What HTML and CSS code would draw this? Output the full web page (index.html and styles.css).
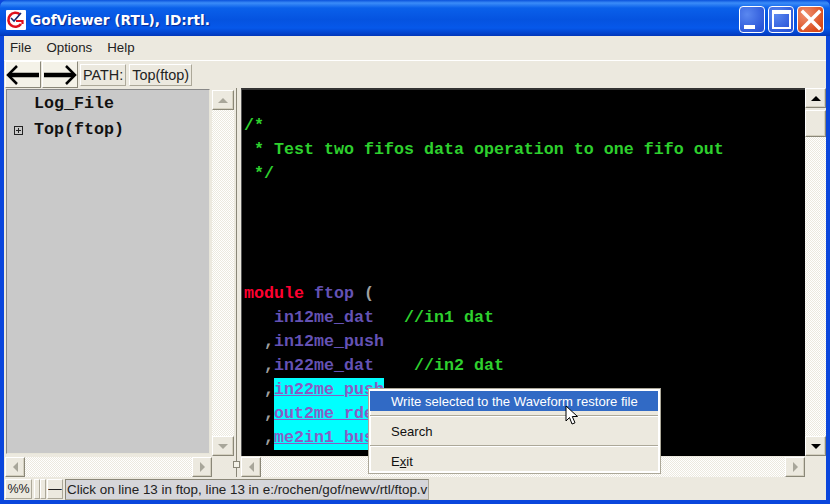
FILE: index.html
```html
<!DOCTYPE html>
<html lang="en">
<head>
    <meta charset="UTF-8">
    <title>GofViewer (RTL), ID:rtl.</title>
    <link rel="stylesheet" href="styles.css">
</head>
<body>
    <div class="window">
        <div class="titlebar">
            <svg class="app-icon" width="20" height="20" viewBox="0 0 20 20">
                <rect width="20" height="20" rx="1" fill="#fff"/>
                <path d="M14 4.5A7 7 0 1 0 15 14" fill="none" stroke="#e0101c" stroke-width="2.6"/>
                <path d="M10 11h6.5v3" fill="none" stroke="#e0101c" stroke-width="2.2"/>
                <path d="M5 8l3 3 7-8" fill="none" stroke="#1a2a70" stroke-width="1.6"/>
            </svg>
            <span class="title">GofViewer (RTL), ID:rtl.</span>
            <div class="caption-buttons">
                <div class="cap-btn"><span class="min-glyph"></span></div>
                <div class="cap-btn"><span class="max-glyph"></span></div>
                <div class="cap-btn close">
                    <svg width="24" height="24" viewBox="0 0 24 24"><path d="M4 4l16 16M20 4L4 20" stroke="#fff" stroke-width="3.500" stroke-linecap="square"/></svg>
                </div>
            </div>
        </div>
        <div class="body">
            <div class="menubar">
                <span class="menu-item">File</span>
                <span class="menu-item">Options</span>
                <span class="menu-item">Help</span>
            </div>
            <div class="toolbar">
                <button class="arrow-btn">
                    <svg width="34" height="20" viewBox="0 0 34 20"><path d="M3 10h30" stroke="#000" stroke-width="4.500"/><path d="M11 1L2 10l9 9" fill="none" stroke="#000" stroke-width="2.500"/></svg>
                </button>
                <button class="arrow-btn">
                    <svg width="34" height="20" viewBox="0 0 34 20"><path d="M1 10h30" stroke="#000" stroke-width="4.500"/><path d="M23 1L32 10l-9 9" fill="none" stroke="#000" stroke-width="2.500"/></svg>
                </button>
                <span class="path-box">PATH:</span>
                <span class="path-box">Top(ftop)</span>
            </div>
            <div class="panes">
                <div class="left-side">
                    <div class="left-top">
                        <div class="tree">
                            <div class="tree-row"><span class="tree-label">Log_File</span></div>
                            <div class="tree-row"><span class="expander"></span><span class="tree-label">Top(ftop)</span></div>
                        </div>
                        <div class="vscroll vscroll-left">
                            <div class="sb-btn"><span class="tri up grey"></span></div>
                            <div class="track"></div>
                            <div class="sb-btn"><span class="tri down grey"></span></div>
                        </div>
                    </div>
                    <div class="hscroll hscroll-left">
                        <div class="sb-btn"><span class="tri left grey"></span></div>
                        <div class="track"></div>
                        <div class="sb-btn"><span class="tri right grey"></span></div>
                    </div>
                </div>
                <div class="splitter"><span class="split-handle"></span></div>
                <div class="right-side">
                    <div class="right-top">
                        <pre class="code">

<span class="c-green">/*
 * Test two fifos data operation to one fifo out
 */</span>




<span class="c-red">module</span> <span class="c-purple">ftop</span> <span class="c-grey">(</span>
   <span class="c-purple">in12me_dat</span>   <span class="c-green">//in1 dat</span>
  <span class="c-grey">,</span><span class="c-purple">in12me_push</span>
  <span class="c-grey">,</span><span class="c-purple">in22me_dat</span>    <span class="c-green">//in2 dat</span>
  <span class="c-grey">,</span><span class="hl">in22me_push</span>
  <span class="c-grey">,</span><span class="hl">out2me_rdes</span>
  <span class="c-grey">,</span><span class="hl">me2in1_busy</span></pre>
                        <div class="vscroll vscroll-right">
                            <div class="sb-btn"><span class="tri up"></span></div>
                            <div class="sb-btn thumb"></div>
                            <div class="track"></div>
                            <div class="sb-btn"><span class="tri down"></span></div>
                        </div>
                    </div>
                    <div class="hscroll hscroll-right">
                        <div class="sb-btn"><span class="tri left grey"></span></div>
                        <div class="track"></div>
                        <div class="sb-btn"><span class="tri right grey"></span></div>
                    </div>
                </div>
            </div>
            <div class="statusbar">
                <span class="st-box st-pct">%%</span>
                <span class="st-grip"></span>
                <span class="st-grip"></span>
                <span class="st-box st-dash">&mdash;</span>
                <span class="st-msg">Click on line 13 in ftop, line 13 in e:/rochen/gof/newv/rtl/ftop.v</span>
            </div>
        </div>
    </div>

    <div class="context-menu">
        <div class="cm-item active">Write selected to the Waveform restore file</div>
        <div class="cm-sep"></div>
        <div class="cm-item">Search</div>
        <div class="cm-sep"></div>
        <div class="cm-item">E<u>x</u>it</div>
    </div>
    <svg class="cursor" width="14" height="22" viewBox="0 0 14 22">
        <path d="M1 1v15l3.500-3.500 2.500 6.500 3-1.200-2.700-6.300H12.500z" fill="#fff" stroke="#000" stroke-width="1"/>
    </svg>
</body>
</html>
```

FILE: styles.css
```css
* {
    box-sizing: border-box;
}
body {
    margin: 0;
    width: 830px;
    height: 504px;
    overflow: hidden;
    font-family: "Liberation Sans", Arial, sans-serif;
    font-size: 13px;
    color: #000;
    background-color: #0a3fd0;
}
.window {
    width: 830px;
    height: 504px;
    display: flex;
    flex-direction: column;
    background-color: #0a46dc;
}
.titlebar {
    height: 36px;
    flex-shrink: 0;
    display: flex;
    align-items: center;
    padding: 3px 6px 0 6px;
    border-radius: 7px 7px 0 0;
    background: linear-gradient(to bottom, #0a52dc 0, #3b8cf8 3px, #0a60ea 8px, #0553e0 20px, #0658ea 28px, #0340c8 34px, #0236b8 36px);
}
.app-icon {
    flex-shrink: 0;
}
.title {
    margin-left: 4px;
    color: #fff;
    font-family: "DejaVu Sans", sans-serif;
    font-weight: bold;
    font-size: 13.7px;
    text-shadow: 1px 1px 1px #0a2a90;
    white-space: nowrap;
}
.caption-buttons {
    margin-left: auto;
    display: flex;
    gap: 3px;
}
.cap-btn {
    width: 26px;
    height: 27px;
    border: 1px solid #fff;
    border-radius: 4px;
    background: radial-gradient(circle at 30% 30%, #5a88f0, #2a55d8 80%);
    display: flex;
    align-items: center;
    justify-content: center;
}
.cap-btn.close {
    width: 27px;
    background: radial-gradient(circle at 30% 30%, #f09070, #d84818 80%);
}
.min-glyph {
    width: 11px;
    height: 4px;
    background-color: #fff;
    align-self: flex-end;
    margin: 0 6px 3px 0;
}
.max-glyph {
    width: 19px;
    height: 19px;
    border: 2px solid #fff;
    border-top-width: 4px;
}
.body {
    flex: 1;
    margin: 0 4px 4px;
    display: flex;
    flex-direction: column;
    background-color: #ece9df;
    min-height: 0;
}
.menubar {
    height: 25px;
    flex-shrink: 0;
    display: flex;
    align-items: center;
    padding: 0 6px 1px;
    gap: 15px;
    font-size: 13.3px;
    border-bottom: 1px solid #fff;
    color: #222;
}
.toolbar {
    height: 27px;
    flex-shrink: 0;
    display: flex;
    align-items: center;
    padding: 0 0 0 1px;
    gap: 1px;
}
.arrow-btn {
    width: 36px;
    height: 27px;
    padding: 0;
    margin: 0;
    border: 1px solid;
    border-color: #fff #8a8778 #8a8778 #fff;
    background-color: #f4f2e8;
    display: flex;
    align-items: center;
    justify-content: center;
}
.arrow-btn + .path-box {
    margin-left: 1px;
}
.path-box {
    height: 22px;
    margin-left: 2px;
    padding: 0 2px;
    line-height: 20px;
    font-size: 14.4px;
    border: 1px solid;
    border-color: #fff #aca899 #aca899 #fff;
    white-space: nowrap;
    color: #222;
}
.panes {
    flex: 1;
    min-height: 0;
    display: flex;
}
.left-side {
    width: 230px;
    flex-shrink: 0;
    display: flex;
    flex-direction: column;
}
.left-top {
    flex: 1;
    min-height: 0;
    display: flex;
    padding-top: 1px;
}
.tree {
    width: 204px;
    margin-left: 2px;
    margin-bottom: 2px;
    flex-shrink: 0;
    background-color: #c9c9c9;
    border: 1px solid #e8e6da;
    border-top-color: #888;
    border-left-color: #888;
    font-family: "Liberation Mono", monospace;
    font-weight: bold;
    font-size: 16.67px;
}
.tree-row {
    height: 26px;
    display: flex;
    align-items: center;
    padding-left: 27px;
    position: relative;
    color: #111;
}
.expander {
    width: 9px;
    height: 9px;
    border: 1px solid #222;
    background: linear-gradient(#222, #222) center / 5px 1px no-repeat, linear-gradient(#222, #222) center / 1px 5px no-repeat;
    position: absolute;
    left: 7px;
    top: 10px;
}
.vscroll {
    flex-shrink: 0;
    display: flex;
    flex-direction: column;
}
.vscroll-left {
    width: 22px;
    margin: 1px 0 0 2px;
}
.vscroll-right {
    width: 21px;
}
.hscroll {
    height: 22px;
    flex-shrink: 0;
    display: flex;
    padding: 1px 0;
}
.hscroll-left {
    margin-left: 1px;
    margin-right: 22px;
}
.hscroll-right {
    margin-right: 21px;
}
.sb-btn {
    flex-shrink: 0;
    background-color: #ece9df;
    border: 1px solid;
    border-color: #fff #8a8778 #8a8778 #fff;
    box-shadow: inset -1px -1px 0 #d4d0c0;
    display: flex;
    align-items: center;
    justify-content: center;
}
.vscroll .sb-btn {
    width: 100%;
    height: 20px;
}
.hscroll .sb-btn {
    width: 20px;
    height: 100%;
}
.vscroll .thumb {
    height: 27px;
    margin-top: 2px;
}
.track {
    flex: 1;
    background: repeating-conic-gradient(#fff 0 25%, #ece9df 0 50%) 0 0 / 2px 2px;
}
.tri {
    width: 0;
    height: 0;
    border: 5px solid transparent;
}
.tri.up {
    border-bottom-color: #000;
    border-top-width: 0;
}
.tri.down {
    border-top-color: #000;
    border-bottom-width: 0;
}
.tri.left {
    border-right-color: #000;
    border-left-width: 0;
}
.tri.right {
    border-left-color: #000;
    border-right-width: 0;
}
.tri.up.grey {
    border-bottom-color: #a8a69a;
}
.tri.down.grey {
    border-top-color: #a8a69a;
}
.tri.left.grey {
    border-right-color: #a8a69a;
}
.tri.right.grey {
    border-left-color: #a8a69a;
}
.splitter {
    width: 7px;
    flex-shrink: 0;
    position: relative;
    background: linear-gradient(#8a8778, #8a8778) 2px 0 / 1px 389px no-repeat;
}
.split-handle {
    position: absolute;
    left: -1px;
    top: 373px;
    width: 7px;
    height: 7px;
    background-color: #f4f2e8;
    border: 1px solid #8a8778;
}
.right-side {
    flex: 1;
    min-width: 0;
    display: flex;
    flex-direction: column;
}
.right-top {
    flex: 1;
    min-height: 0;
    display: flex;
}
.code {
    flex: 1;
    min-width: 0;
    margin: 0;
    padding: 0 0 0 2px;
    background-color: #000;
    border-top: 2px solid #333;
    border-left: 1px solid #555;
    font-family: "Liberation Mono", monospace;
    font-weight: bold;
    font-size: 16.67px;
    line-height: 24px;
    overflow: hidden;
}
.c-green {
    color: #2ed02e;
}
.c-red {
    color: #ff0030;
}
.c-purple {
    color: #6452b4;
}
.c-grey {
    color: #a0a0a0;
}
.hl {
    background-color: #00ffff;
    color: #8a5cc4;
    text-decoration: underline;
    display: inline-block;
    height: 24px;
    vertical-align: top;
}
.statusbar {
    height: 22px;
    flex-shrink: 0;
    display: flex;
    align-items: center;
    padding-left: 1px;
    font-size: 13.4px;
    color: #222;
}
.st-box {
    height: 20px;
    line-height: 18px;
    border: 1px solid;
    border-color: #fff #aca899 #aca899 #fff;
    text-align: center;
}
.st-pct {
    width: 27px;
    font-size: 12.5px;
    margin-right: 2px;
}
.st-grip {
    width: 6px;
    height: 20px;
    border: 1px solid;
    border-color: #fff #aca899 #aca899 #fff;
}
.st-dash {
    width: 16px;
    margin: 0 2px 0 1px;
    overflow: hidden;
}
.st-msg {
    height: 21px;
    line-height: 19px;
    padding: 0 1px;
    background-color: #d6d6da;
    border: 1px solid;
    border-color: #8a8778 #aca899 #aca899 #8a8778;
    white-space: nowrap;
}
.context-menu {
    position: absolute;
    left: 368px;
    top: 388px;
    width: 293px;
    height: 86px;
    padding: 2px 2px 0 1px;
    background-color: #ece9df;
    border: 1px solid #aca899;
    box-shadow: inset 0 0 0 2px #fff;
    font-size: 13.1px;
    color: #111;
}
.cm-item {
    height: 20px;
    line-height: 22px;
    padding-left: 21px;
    white-space: nowrap;
}
.cm-item.active {
    background-color: #316ac5;
    color: #fff;
}
.cm-sep {
    height: 2px;
    margin: 4px 0;
    background-color: #aca899;
    border-bottom: 1px solid #fff;
}
.cursor {
    position: absolute;
    left: 565px;
    top: 405px;
}
```
